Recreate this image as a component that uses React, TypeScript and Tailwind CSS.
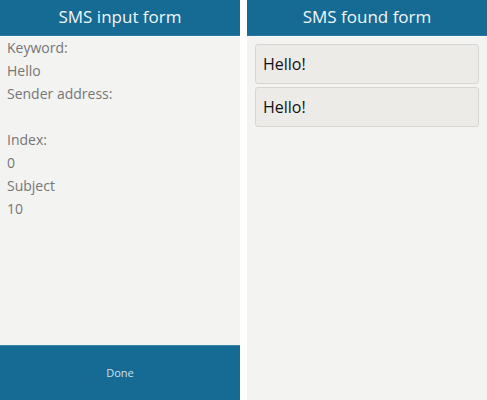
export default function App() {
  const fields: [string, string][] = [
    ["Keyword:", "Hello"],
    ["Sender address:", ""],
    ["Index:", "0"],
    ["Subject", "10"],
  ];
  const found = ["Hello!", "Hello!"];

  return (
    <div className="flex h-[400px] w-[487px] bg-white font-['Open_Sans',sans-serif]">
      <section className="flex w-[240px] flex-col bg-[#f3f3f2]">
        <header className="flex h-[36px] items-center justify-center border-b border-[#2a7aa0] bg-[#156b94] pb-[2px] text-[17px] text-[#f2f6f9]">
          SMS input form
        </header>
        <div className="flex-1 px-[7px] text-[14px] leading-[23px] text-[#767676]">
          {fields.map(([label, value]) => (
            <div key={label}>
              <div>{label}</div>
              <div className="h-[23px]">{value}</div>
            </div>
          ))}
        </div>
        <footer className="flex h-[55px] items-center justify-center border-t border-[#3a85a9] bg-[#156b94] pt-[1px] text-[11px] text-[#cfe0ea]">
          Done
        </footer>
      </section>
      <section className="ml-[7px] flex w-[240px] flex-col bg-[#f3f3f2]">
        <header className="flex h-[36px] items-center justify-center border-b border-[#2a7aa0] bg-[#156b94] pb-[2px] text-[17px] text-[#f2f6f9]">
          SMS found form
        </header>
        <div className="flex flex-col gap-[3px] px-[8px] pt-[8px]">
          {found.map((msg, i) => (
            <div
              key={i}
              className="flex h-[40px] items-center rounded-[3px] border border-[#d8d6d2] bg-[#edebe8] px-[7px] text-[16px] text-[#111]"
            >
              {msg}
            </div>
          ))}
        </div>
      </section>
    </div>
  );
}
